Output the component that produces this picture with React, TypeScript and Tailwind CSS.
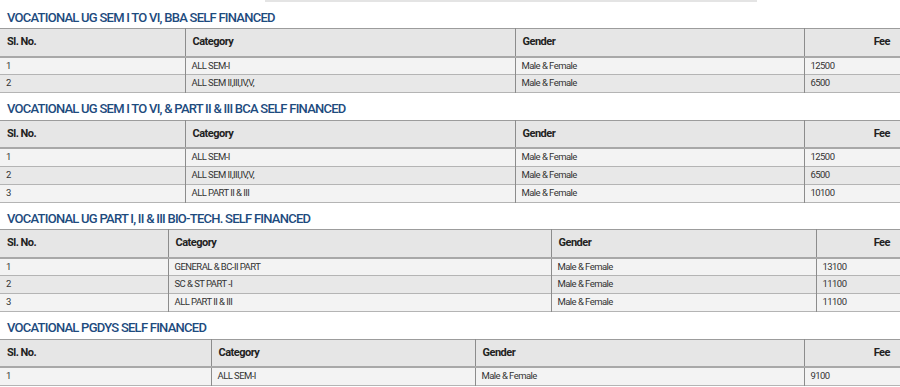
import React from "react";

type Row = [string, string, string, string];

interface FeeTableProps {
  title: string;
  cols: number[];
  rows: Row[];
}

const sections: FeeTableProps[] = [
  {
    title: "VOCATIONAL UG SEM I TO VI, BBA SELF FINANCED",
    cols: [185, 330, 289, 96],
    rows: [
      ["1", "ALL SEM-I", "Male & Female", "12500"],
      ["2", "ALL SEM II,III,IV,V,", "Male & Female", "6500"],
    ],
  },
  {
    title: "VOCATIONAL UG SEM I TO VI, & PART II & III BCA SELF FINANCED",
    cols: [185, 330, 289, 96],
    rows: [
      ["1", "ALL SEM-I", "Male & Female", "12500"],
      ["2", "ALL SEM II,III,IV,V,", "Male & Female", "6500"],
      ["3", "ALL PART II & III", "Male & Female", "10100"],
    ],
  },
  {
    title: "VOCATIONAL UG PART I, II & III BIO-TECH. SELF FINANCED",
    cols: [168, 383, 265, 84],
    rows: [
      ["1", "GENERAL & BC-II PART", "Male & Female", "13100"],
      ["2", "SC & ST PART -I", "Male & Female", "11100"],
      ["3", "ALL PART II & III", "Male & Female", "11100"],
    ],
  },
  {
    title: "VOCATIONAL PGDYS SELF FINANCED",
    cols: [211, 264, 329, 96],
    rows: [["1", "ALL SEM-I", "Male & Female", "9100"]],
  },
];

function FeeTable({ title, cols, rows }: FeeTableProps) {
  return (
    <section>
      <h3 className="h-[26.5px] px-[7px] pt-[8px] text-[13px] font-medium leading-[16px] tracking-[-0.75px] text-[#1d4b7e]">
        {title}
      </h3>
      <table className="w-full table-fixed border-collapse">
        <colgroup>
          {cols.map((w, i) => (
            <col key={i} style={{ width: w }} />
          ))}
        </colgroup>
        <thead>
          <tr className="h-[28px] border-t border-b-2 border-t-[#9c9c9c] border-b-[#a8a8a8] bg-[#e6e6e6] text-[11px] font-bold tracking-[-0.5px] text-[#222]">
            <th className="px-[7px] text-left font-bold">Sl. No.</th>
            <th className="border-l border-[#8c8c8c] px-[7px] text-left font-bold">Category</th>
            <th className="border-l border-[#8c8c8c] px-[7px] text-left font-bold">Gender</th>
            <th className="border-l border-[#8c8c8c] px-[10px] text-right font-bold">Fee</th>
          </tr>
        </thead>
        <tbody>
          {rows.map((r, i) => (
            <tr
              key={i}
              className={
                "h-[18px] border-b border-[#b4b4b4] text-[9.5px] tracking-[-0.55px] text-[#333] " +
                (i % 2 === 0 ? "bg-[#f3f3f3]" : "bg-[#e8e8e8]")
              }
            >
              <td className="px-[6px]">{r[0]}</td>
              <td className="border-l border-[#8c8c8c] px-[6px]">{r[1]}</td>
              <td className="border-l border-[#8c8c8c] px-[6px]">{r[2]}</td>
              <td className="border-l border-[#8c8c8c] px-[6px]">{r[3]}</td>
            </tr>
          ))}
        </tbody>
      </table>
    </section>
  );
}

export default function App() {
  return (
    <div className="relative h-[387px] w-[900px] overflow-hidden bg-white pt-[1.5px] font-['Roboto',sans-serif]">
      <div className="absolute left-[265px] top-0 h-[2px] w-[492px] bg-[#e4e4e4]" />
      <div className="flex flex-col">
        {sections.map((s) => (
          <FeeTable key={s.title} {...s} />
        ))}
      </div>
    </div>
  );
}
